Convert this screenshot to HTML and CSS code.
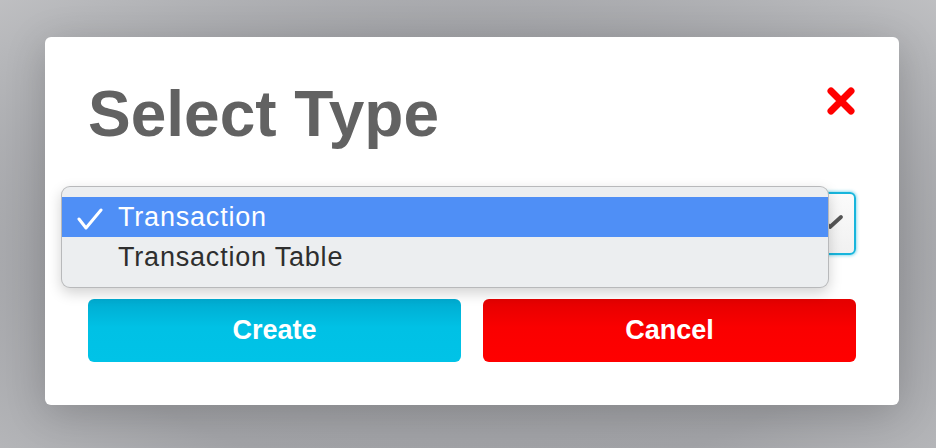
FILE: index.html
```html
<!DOCTYPE html>
<html lang="en">
<head>
<meta charset="utf-8">
<title>Select Type</title>
<link rel="stylesheet" href="styles.css">
</head>
<body>
<div class="page">
  <div class="modal">
    <div class="header">
      <h1 class="title">Select Type</h1>
      <button class="close" aria-label="Close">
        <svg width="30" height="30" viewBox="0 0 30 30"><path d="M5 5 L25 25 M25 5 L5 25" stroke="#ff0000" stroke-width="7" stroke-linecap="round" fill="none"/></svg>
      </button>
    </div>
    <div class="field">
      <div class="select" aria-label="Type">
        <svg class="chevron" width="26" height="16" viewBox="0 0 26 16"><path d="M3 4 L12 13 L23 3" stroke="#555" stroke-width="3.8" stroke-linecap="round" stroke-linejoin="round" fill="none"/></svg>
      </div>
      <ul class="menu">
        <li class="option selected">
          <svg class="check" width="26" height="24" viewBox="0 0 26 24"><path d="M2 12 L9 21 L24 3" stroke="#fff" stroke-width="3" stroke-linecap="round" stroke-linejoin="round" fill="none"/></svg>
          <span>Transaction</span>
        </li>
        <li class="option"><span>Transaction Table</span></li>
      </ul>
    </div>
    <div class="actions">
      <button class="btn btn-create">Create</button>
      <button class="btn btn-cancel">Cancel</button>
    </div>
  </div>
</div>
</body>
</html>
```

FILE: styles.css
```css
html, body {
  margin: 0;
  padding: 0;
  height: 100%;
}
body {
  font-family: "Liberation Sans", Arial, Helvetica, sans-serif;
  background: radial-gradient(ellipse 80% 90% at 50% 58%, #9d9ea2 0%, #a2a3a7 55%, #b6b7ba 80%, #c7c7c9 100%);
  overflow: hidden;
}
.page {
  padding: 37px 0 0 45px;
}
.modal {
  width: 854px;
  box-sizing: border-box;
  background: #ffffff;
  border-radius: 6px;
  padding: 45px 43px 43px 43px;
  box-shadow: 0 8px 40px rgba(0, 0, 0, 0.18);
}
.header {
  display: flex;
  justify-content: space-between;
  align-items: flex-start;
}
.title {
  margin: 0;
  font-size: 64px;
  line-height: 64px;
  font-weight: bold;
  color: #626262;
}
.close {
  margin-top: 4px;
  padding: 0;
  border: 0;
  background: none;
  width: 30px;
  height: 30px;
  display: block;
}
.close svg {
  display: block;
}
.field {
  position: relative;
  margin-top: 46px;
}
.select {
  height: 63px;
  box-sizing: border-box;
  border: 2px solid #17b5dc;
  border-radius: 6px;
  box-shadow: 0 0 3px 1px rgba(23, 181, 220, 0.45);
  background: linear-gradient(#fbfbfb, #f1f1f1);
  display: flex;
  align-items: center;
  justify-content: flex-end;
  padding: 0 10px 0 20px;
}
.chevron {
  display: block;
  margin-top: -4px;
}
.menu {
  position: absolute;
  left: -27px;
  top: -6px;
  width: 768px;
  box-sizing: border-box;
  margin: 0;
  padding: 10px 0;
  list-style: none;
  background: #eceef0;
  border: 1px solid rgba(0, 0, 0, 0.22);
  border-radius: 9px;
  box-shadow: 0 5px 14px rgba(0, 0, 0, 0.18);
}
.option {
  position: relative;
  height: 40px;
  line-height: 40px;
  padding-left: 56px;
  font-size: 27px;
  letter-spacing: 0.8px;
  color: #2e2e2e;
}
.option.selected {
  background: #4f8ff6;
  color: #ffffff;
}
.check {
  position: absolute;
  left: 15px;
  top: 10px;
}
.actions {
  display: grid;
  grid-template-columns: 1fr 1fr;
  gap: 22px;
  margin-top: 44px;
}
.btn {
  height: 63px;
  border: 0;
  border-radius: 6px;
  font-family: "Liberation Sans", Arial, Helvetica, sans-serif;
  font-size: 27px;
  font-weight: bold;
  color: #ffffff;
  padding: 0;
}
.btn-create {
  background: linear-gradient(#00abd0, #00c1e5 45%, #00c3e7);
}
.btn-cancel {
  background: linear-gradient(#e40000, #fa0000 45%, #ff0000);
}
```
